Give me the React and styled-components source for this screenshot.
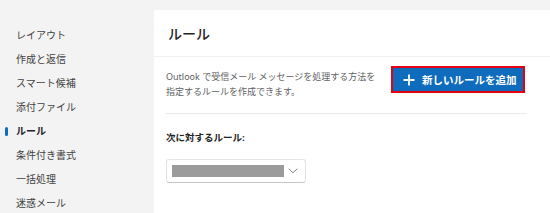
import React from "react";
import styled, { createGlobalStyle } from "styled-components";

const Global = createGlobalStyle`
  html, body { margin: 0; padding: 0; }
  body {
    width: 550px;
    height: 213px;
    overflow: hidden;
    background: #f3f3f3;
    font-family: "Noto Sans", "Noto Sans CJK JP", sans-serif;
  }
`;

const Page = styled.div`
  display: flex;
  width: 550px;
  height: 213px;
  background: #f3f3f3;
`;

const Sidebar = styled.nav`
  width: 154px;
  flex: none;
  padding-top: 23px;
  box-sizing: border-box;
  display: flex;
  flex-direction: column;
`;

const NavItem = styled.div`
  position: relative;
  height: 24px;
  line-height: 24px;
  padding-left: 16px;
  font-size: 10px;
  color: ${(p) => (p.$active ? "#242424" : "#424242")};
  font-weight: ${(p) => (p.$active ? 700 : 400)};
  white-space: nowrap;

  &::before {
    content: "";
    display: ${(p) => (p.$active ? "block" : "none")};
    position: absolute;
    left: 5px;
    top: 8px;
    width: 3px;
    height: 9px;
    border-radius: 2px;
    background: #0f6cbd;
  }
`;

const Right = styled.div`
  flex: 1;
  padding-top: 10px;
  display: flex;
  flex-direction: column;
`;

const Panel = styled.main`
  flex: 1;
  background: #ffffff;
  display: flex;
  flex-direction: column;
`;

const Header = styled.h1`
  margin: 0;
  height: 47px;
  box-sizing: border-box;
  border-bottom: 1px solid #f1f1f1;
  padding-left: 14px;
  display: flex;
  align-items: center;
  font-size: 14px;
  font-weight: 500;
  color: #242424;
`;

const Body = styled.section`
  padding: 0 24px 0 12px;
  display: flex;
  flex-direction: column;
`;

const Row = styled.div`
  display: flex;
  justify-content: space-between;
  align-items: flex-start;
  margin-top: 9px;
`;

const Description = styled.p`
  margin: 3px 0 0 0;
  font-size: 9px;
  line-height: 15px;
  color: #616161;
`;

const AddButton = styled.button`
  width: 134px;
  height: 27px;
  box-sizing: border-box;
  margin-right: 1px;
  border: 2px solid #e60012;
  background: #0f6cbd;
  color: #ffffff;
  display: flex;
  align-items: center;
  gap: 7px;
  padding: 0 0 0 10px;
  font-family: inherit;
  font-size: 10.5px;
  font-weight: 700;
  cursor: pointer;
  white-space: nowrap;
`;

const Divider = styled.hr`
  margin: 14px -1px 0 0;
  border: none;
  border-top: 1px solid #ebebeb;
`;

const Label = styled.div`
  margin-top: 17px;
  font-size: 9.5px;
  line-height: 14px;
  font-weight: 700;
  color: #242424;
`;

const Select = styled.div`
  margin-top: 14px;
  width: 140px;
  height: 24px;
  box-sizing: border-box;
  border: 1px solid #e3e3e3;
  border-bottom-color: #c4c4c4;
  border-radius: 3px;
  display: flex;
  align-items: center;
  padding-left: 5px;
  gap: 4px;
`;

const Redacted = styled.div`
  width: 112px;
  height: 12px;
  background: #9b9b9b;
`;

const Plus = () => (
  <svg width="12" height="12" viewBox="0 0 12 12" aria-hidden="true">
    <path d="M6 0.5V11.5M0.5 6H11.5" stroke="#fff" strokeWidth="1.8" fill="none" />
  </svg>
);

const Chevron = () => (
  <svg width="10" height="6" viewBox="0 0 10 6" aria-hidden="true">
    <path d="M0.8 0.8L5 4.8L9.2 0.8" stroke="#707070" strokeWidth="0.9" fill="none" />
  </svg>
);

const navItems = [
  "レイアウト",
  "作成と返信",
  "スマート候補",
  "添付ファイル",
  "ルール",
  "条件付き書式",
  "一括処理",
  "迷惑メール",
];

export default function App() {
  return (
    <>
      <Global />
      <Page>
        <Sidebar>
          {navItems.map((t) => (
            <NavItem key={t} $active={t === "ルール"}>
              {t}
            </NavItem>
          ))}
        </Sidebar>
        <Right>
          <Panel>
            <Header>ルール</Header>
            <Body>
              <Row>
                <Description>
                  Outlook で受信メール メッセージを処理する方法を
                  <br />
                  指定するルールを作成できます。
                </Description>
                <AddButton>
                  <Plus />
                  新しいルールを追加
                </AddButton>
              </Row>
              <Divider />
              <Label>次に対するルール:</Label>
              <Select>
                <Redacted />
                <Chevron />
              </Select>
            </Body>
          </Panel>
        </Right>
      </Page>
    </>
  );
}
